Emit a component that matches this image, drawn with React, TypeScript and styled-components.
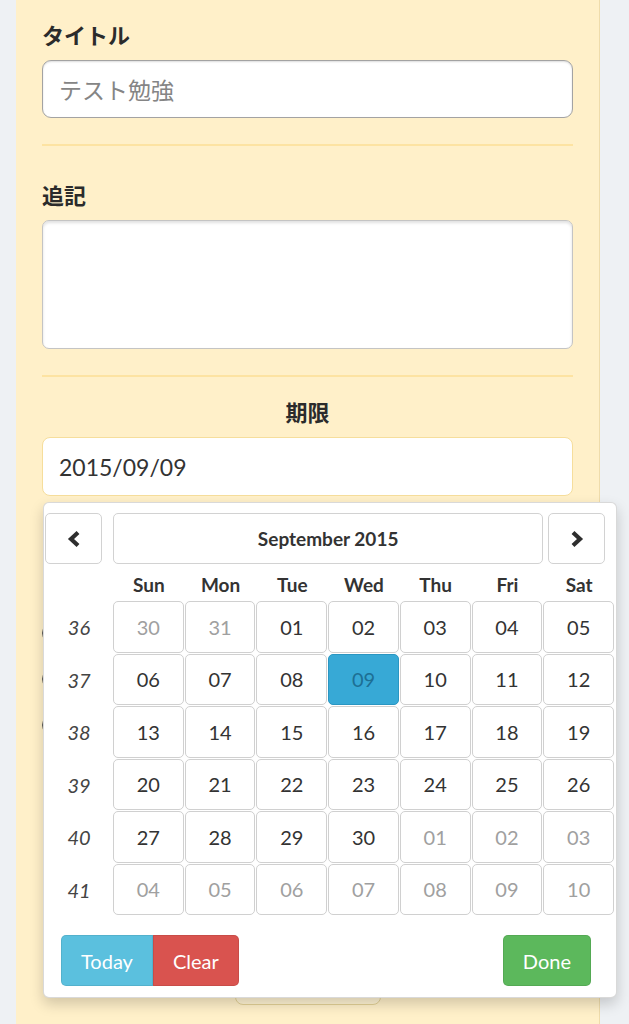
import styled, { createGlobalStyle } from "styled-components";

const GlobalStyle = createGlobalStyle`
  html, body {
    margin: 0;
    padding: 0;
    background: #eef1f4;
    font-family: Lato, "Noto Sans CJK JP", sans-serif;
    color: #333;
  }
  * { box-sizing: border-box; }
`;

const weekdays = ["Sun", "Mon", "Tue", "Wed", "Thu", "Fri", "Sat"];
const weeks = [36, 37, 38, 39, 40, 41];

// 2015/08/30 .. 2015/10/10
const days = Array.from({ length: 42 }, (_, i) => {
  if (i < 2) return { num: 30 + i, muted: true };
  if (i < 32) return { num: i - 1, muted: false };
  return { num: i - 31, muted: true };
});

const pad = (n: number) => String(n).padStart(2, "0");

const Chevron = ({ dir }: { dir: "left" | "right" }) => (
  <svg width="16" height="18" viewBox="0 0 16 18">
    <polyline
      points={dir === "left" ? "12,2.5 5,9 12,15.5" : "4,2.5 11,9 4,15.5"}
      fill="none"
      stroke="#2e2e2e"
      strokeWidth="4.2"
      strokeLinejoin="miter"
    />
  </svg>
);

const App = () => {
  return (
    <>
      <GlobalStyle />
      <Page>
        <Panel>
          <Label>タイトル</Label>
          <TextInput placeholder="テスト勉強" />
          <Divider />

          <Label $top={32}>追記</Label>
          <TextArea />
          <Divider />

          <Label $top={18} $center>期限</Label>
          <DateField>
            <DateInput defaultValue="2015/09/09" />
            <Picker>
              <Grid>
                <NavButton $side="left" aria-label="prev">
                  <Chevron dir="left" />
                </NavButton>
                <MonthButton>September 2015</MonthButton>
                <NavButton $side="right" aria-label="next">
                  <Chevron dir="right" />
                </NavButton>

                <span />
                {weekdays.map((d) => (
                  <Weekday key={d}>{d}</Weekday>
                ))}

                {weeks.map((w, r) => (
                  <Row key={w}>
                    <WeekNum>{w}</WeekNum>
                    {days.slice(r * 7, r * 7 + 7).map((d, c) => (
                      <Day
                        key={c}
                        $muted={d.muted}
                        $active={!d.muted && d.num === 9}
                      >
                        {pad(d.num)}
                      </Day>
                    ))}
                  </Row>
                ))}
              </Grid>
              <Footer>
                <BtnGroup>
                  <Btn $color="#5bc0de" $join="left">Today</Btn>
                  <Btn $color="#d9534f" $join="right">Clear</Btn>
                </BtnGroup>
                <Btn $color="#5cb85c">Done</Btn>
              </Footer>
            </Picker>
          </DateField>

          <Radios>
            <Radio type="radio" name="prio" aria-label="prio-1" />
            <Radio type="radio" name="prio" aria-label="prio-2" />
            <Radio type="radio" name="prio" aria-label="prio-3" />
          </Radios>

          <SubmitWrap>
            <Submit aria-label="submit" />
          </SubmitWrap>
        </Panel>
      </Page>
    </>
  );
};

export default App;

const Page = styled.div`
  padding-left: 16px;
  width: 629px;
  height: 1024px;
  overflow: hidden;
`;

const Panel = styled.div`
  width: 584px;
  min-height: 1100px;
  background: #fff0c9;
  border-right: 1px solid #efdcab;
  padding: 18px 26px 0 26px;
`;

const Label = styled.div<{ $top?: number; $center?: boolean }>`
  margin-top: ${(p) => p.$top ?? 0}px;
  margin-bottom: 10px;
  height: 32px;
  line-height: 32px;
  font-size: 22px;
  font-weight: 700;
  color: #2b2b2b;
  text-align: ${(p) => (p.$center ? "center" : "left")};
  font-family: "Noto Sans CJK JP", sans-serif;
`;

const TextInput = styled.input`
  display: block;
  width: 100%;
  height: 58px;
  border: 1px solid #a3a3a3;
  border-radius: 9px;
  background: #fff;
  box-shadow: inset 0 1px 2px rgba(0, 0, 0, 0.14);
  padding: 0 16px;
  font-size: 23px;
  font-family: "Noto Sans CJK JP", sans-serif;
  color: #333;
  outline: none;
  &::placeholder {
    color: #858585;
  }
`;

const TextArea = styled.textarea`
  display: block;
  width: 100%;
  height: 129px;
  border: 1px solid #c4c4c4;
  border-radius: 7px;
  background: #fff;
  box-shadow: inset 0 2px 3px rgba(0, 0, 0, 0.12);
  resize: none;
  outline: none;
`;

const Divider = styled.hr`
  margin: 26px 0 0 0;
  border: none;
  height: 2px;
  background: #fde3a2;
`;

const DateField = styled.div`
  position: relative;
`;

const DateInput = styled.input`
  display: block;
  width: 100%;
  height: 59px;
  border: 1px solid #f6de9c;
  border-radius: 8px;
  background: #fff;
  padding: 0 16px;
  font-size: 23px;
  font-family: Lato, sans-serif;
  color: #333;
  outline: none;
`;

const Picker = styled.div`
  position: absolute;
  top: 65px;
  left: 1px;
  width: 574px;
  z-index: 10;
  background: #fff;
  border: 1px solid rgba(0, 0, 0, 0.15);
  border-radius: 6px;
  box-shadow: 0 6px 14px rgba(0, 0, 0, 0.18);
  padding: 10px 1px 11px 1px;
`;

const Grid = styled.div`
  display: grid;
  grid-template-columns: 68px repeat(7, 1fr);
  grid-auto-rows: auto;
  font-family: Lato, sans-serif;
`;

const NavButton = styled.button<{ $side: "left" | "right" }>`
  width: 57px;
  height: 51px;
  margin-left: ${(p) => (p.$side === "right" ? "5px" : "0")};
  border: 1px solid #d2d2d2;
  border-radius: 5px;
  background: #fff;
  display: flex;
  align-items: center;
  justify-content: center;
  padding: 0;
`;

const MonthButton = styled.button`
  grid-column: span 6;
  height: 51px;
  border: 1px solid #d2d2d2;
  border-radius: 5px;
  background: #fff;
  font-family: Lato, sans-serif;
  font-weight: 700;
  font-size: 19px;
  color: #333;
`;

const Weekday = styled.div`
  height: 37px;
  display: flex;
  align-items: center;
  justify-content: center;
  font-weight: 700;
  font-size: 19px;
  color: #333;
  padding-top: 4px;
`;

const Row = styled.div`
  display: contents;
`;

const WeekNum = styled.div`
  height: 52.5px;
  display: flex;
  align-items: center;
  justify-content: center;
  font-style: italic;
  font-size: 20px;
  color: #444;
`;

const Day = styled.div<{ $muted?: boolean; $active?: boolean }>`
  height: 51.5px;
  margin: 0 1px 1px 0;
  display: flex;
  align-items: center;
  justify-content: center;
  font-size: 20px;
  border-radius: 5px;
  border: 1px solid ${(p) => (p.$active ? "#2a96c2" : "#d0d0d0")};
  background: ${(p) => (p.$active ? "#37a9d6" : "#fff")};
  color: ${(p) => (p.$active ? "#1d6f94" : p.$muted ? "#a0a0a0" : "#333")};
`;

const Footer = styled.div`
  display: flex;
  justify-content: space-between;
  align-items: center;
  padding: 0 24px 0 16px;
  margin-top: 19px;
`;

const BtnGroup = styled.div`
  display: flex;
`;

const Btn = styled.button<{ $color: string; $join?: "left" | "right" }>`
  height: 51px;
  padding: 0 19px;
  border: 1px solid rgba(0, 0, 0, 0.08);
  background: ${(p) => p.$color};
  color: #fff;
  font-family: Lato, sans-serif;
  font-size: 20px;
  border-radius: ${(p) =>
    p.$join === "left" ? "5px 0 0 5px" : p.$join === "right" ? "0 5px 5px 0" : "5px"};
`;

const Radios = styled.div`
  margin-top: 127px;
  display: flex;
  flex-direction: column;
  gap: 26px;
`;

const Radio = styled.input`
  margin: 0;
  width: 20px;
  height: 20px;
  appearance: none;
  border: 3px solid #555;
  border-radius: 50%;
  background: #fff;
`;

const SubmitWrap = styled.div`
  display: flex;
  justify-content: center;
  margin-top: 220px;
`;

const Submit = styled.button`
  width: 146px;
  height: 50px;
  border: 1px solid #e3d196;
  border-radius: 8px;
  background: #fff3d2;
`;
